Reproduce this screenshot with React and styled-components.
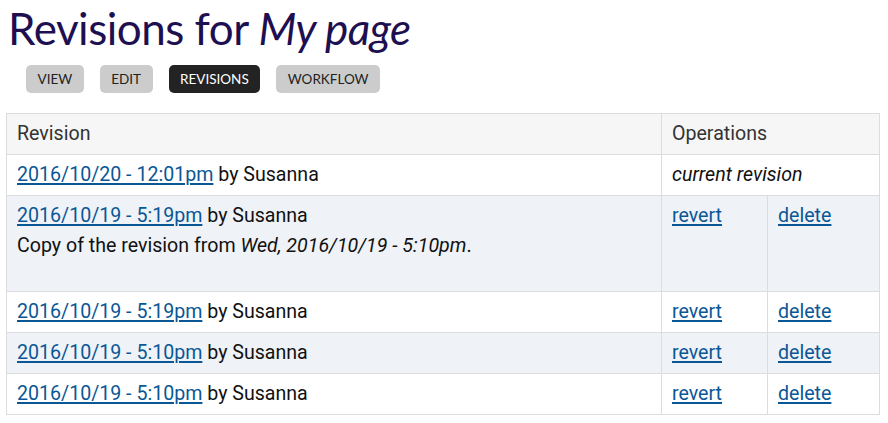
import React from "react";
import styled, { createGlobalStyle } from "styled-components";

const GlobalStyle = createGlobalStyle`
  body {
    margin: 0;
    background: #fff;
    font-family: Roboto, "Liberation Sans", sans-serif;
    color: #111;
  }
`;

const revisions = [
  { id: 1, date: "2016/10/20 - 12:01pm", author: "Susanna", current: true },
  {
    id: 2,
    date: "2016/10/19 - 5:19pm",
    author: "Susanna",
    note: "Wed, 2016/10/19 - 5:10pm",
  },
  { id: 3, date: "2016/10/19 - 5:19pm", author: "Susanna" },
  { id: 4, date: "2016/10/19 - 5:10pm", author: "Susanna" },
  { id: 5, date: "2016/10/19 - 5:10pm", author: "Susanna" },
];

const tabs = ["View", "Edit", "Revisions", "Workflow"];

const App = () => {
  return (
    <Page>
      <GlobalStyle />
      <Title>
        Revisions for <em>My page</em>
      </Title>
      <Tabs>
        {tabs.map((t) => (
          <Tab key={t} active={t === "Revisions"}>
            {t}
          </Tab>
        ))}
      </Tabs>
      <Table>
        <thead>
          <tr>
            <Th>Revision</Th>
            <Th colSpan={2}>Operations</Th>
          </tr>
        </thead>
        <tbody>
          {revisions.map((r, i) => (
            <Row key={r.id} shaded={i % 2 === 1}>
              <Td>
                <Link href="#">{r.date}</Link> by {r.author}
                {r.note && (
                  <Note>
                    Copy of the revision from <em>{r.note}</em>.
                  </Note>
                )}
              </Td>
              {r.current ? (
                <Td colSpan={2}>
                  <em>current revision</em>
                </Td>
              ) : (
                <>
                  <OpTd w={85}>
                    <Link href="#">revert</Link>
                  </OpTd>
                  <OpTd w={91}>
                    <Link href="#">delete</Link>
                  </OpTd>
                </>
              )}
            </Row>
          ))}
        </tbody>
      </Table>
    </Page>
  );
};

const Page = styled.main`
  padding: 0 8px 0 6px;
`;

const Title = styled.h1`
  margin: 0;
  padding: 2px 0 0 2px;
  font-family: Lato, "Open Sans", sans-serif;
  font-weight: 400;
  font-size: 44px;
  line-height: 52px;
  color: #1e1050;
  letter-spacing: -0.5px;
  em {
    font-style: italic;
  }
`;

const Tabs = styled.nav`
  display: flex;
  gap: 16px;
  padding: 11px 0 0 20px;
  margin-bottom: 20px;
`;

const Tab = styled.a`
  display: flex;
  align-items: center;
  height: 28px;
  padding: 0 11.5px;
  border-radius: 5px;
  font-family: Lato, sans-serif;
  font-size: 13.5px;
  text-transform: uppercase;
  background: ${(p) => (p.active ? "#232323" : "#cccccc")};
  color: ${(p) => (p.active ? "#fff" : "#222")};
`;

const Table = styled.table`
  width: 874px;
  border-collapse: collapse;
  font-size: 19.6px;
  line-height: 20px;
`;

const Th = styled.th`
  text-align: left;
  font-weight: 400;
  background: #f6f6f6;
  color: #333;
  border: 1px solid #dcdcdc;
  padding: 10px 10px;
  height: 20px;
`;

const Row = styled.tr`
  background: ${(p) => (p.shaded ? "#eff2f7" : "#fff")};
`;

const Td = styled.td`
  border: 1px solid #dcdcdc;
  padding: 10px 10px;
  vertical-align: top;
`;

const OpTd = styled(Td)`
  width: ${(p) => p.w}px;
`;

const Link = styled.a`
  color: #0a5796;
  text-decoration: underline;
  text-decoration-thickness: 2px;
  text-underline-offset: 2px;
`;

const Note = styled.p`
  margin: 10px 0 25px;
`;

export default App;
